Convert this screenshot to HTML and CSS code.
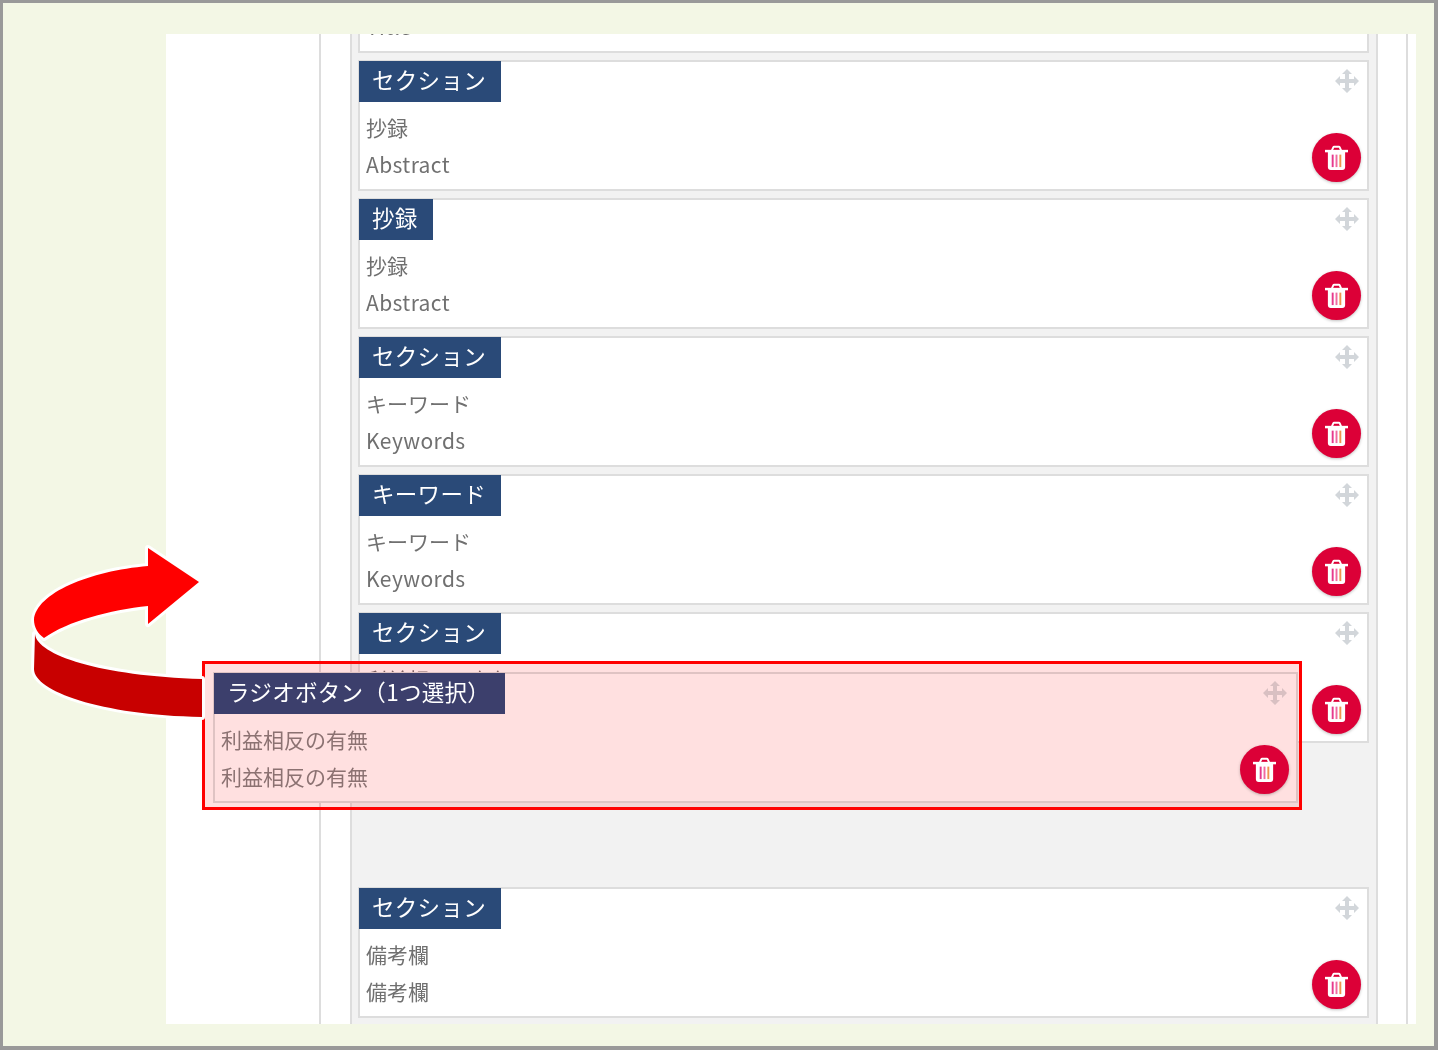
FILE: index.html
```html
<!DOCTYPE html>
<html lang="ja">
<head>
    <meta charset="UTF-8">
    <meta name="viewport" content="width=device-width, initial-scale=1.0">
    <title>フォーム項目の並べ替え</title>
    <link rel="stylesheet" href="styles.css">
</head>
<body>
    <svg class="icon-defs" width="0" height="0">
        <symbol id="icon-move" viewBox="0 0 24 24">
            <path d="M12 0l5 5h-3v5h5V7l5 5-5 5v-3h-5v5h3l-5 5-5-5h3v-5H5v3l-5-5 5-5v3h5V5H7z"/>
        </symbol>
        <symbol id="icon-trash" viewBox="0 0 24 26">
            <path d="M7 6l1.6-3.6a1 1 0 0 1 .9-.6h5a1 1 0 0 1 .9.6L17 6" fill="none" stroke="#fff" stroke-width="2"/>
            <rect x="0" y="5" width="24" height="2.6" fill="#fff"/>
            <path d="M3 7h18v16a3 3 0 0 1-3 3H6a3 3 0 0 1-3-3z" fill="#fff"/>
            <rect x="7" y="10" width="2" height="13" fill="#e6398c"/>
            <rect x="11" y="10" width="2" height="13" fill="#f06aa0"/>
            <rect x="15" y="10" width="2" height="13" fill="#ef944f"/>
        </symbol>
    </svg>

    <div class="frame">
        <div class="panel">
            <div class="outer-col">
                <div class="inner-col">
                    <div class="list">
                        <div class="card">
                            <div class="card-body">
                                <div class="tag">セクション</div>
                                <div class="line">タイトル</div>
                                <div class="line line-en">Title</div>
                            </div>
                        </div>
                        <div class="card">
                            <div class="card-body">
                                <div class="tag">セクション</div>
                                <div class="line">抄録</div>
                                <div class="line line-en">Abstract</div>
                            </div>
                            <div class="card-actions">
                                <svg class="move"><use href="#icon-move"/></svg>
                                <div class="del"><svg class="trash"><use href="#icon-trash"/></svg></div>
                            </div>
                        </div>
                        <div class="card">
                            <div class="card-body">
                                <div class="tag">抄録</div>
                                <div class="line">抄録</div>
                                <div class="line line-en">Abstract</div>
                            </div>
                            <div class="card-actions">
                                <svg class="move"><use href="#icon-move"/></svg>
                                <div class="del"><svg class="trash"><use href="#icon-trash"/></svg></div>
                            </div>
                        </div>
                        <div class="card">
                            <div class="card-body">
                                <div class="tag">セクション</div>
                                <div class="line">キーワード</div>
                                <div class="line line-en">Keywords</div>
                            </div>
                            <div class="card-actions">
                                <svg class="move"><use href="#icon-move"/></svg>
                                <div class="del"><svg class="trash"><use href="#icon-trash"/></svg></div>
                            </div>
                        </div>
                        <div class="card">
                            <div class="card-body">
                                <div class="tag">キーワード</div>
                                <div class="line">キーワード</div>
                                <div class="line line-en">Keywords</div>
                            </div>
                            <div class="card-actions">
                                <svg class="move"><use href="#icon-move"/></svg>
                                <div class="del"><svg class="trash"><use href="#icon-trash"/></svg></div>
                            </div>
                        </div>
                        <div class="card">
                            <div class="card-body">
                                <div class="tag">セクション</div>
                                <div class="line">利益相反の有無</div>
                                <div class="line">利益相反の有無</div>
                            </div>
                            <div class="card-actions">
                                <svg class="move"><use href="#icon-move"/></svg>
                                <div class="del"><svg class="trash"><use href="#icon-trash"/></svg></div>
                            </div>
                        </div>
                        <div class="placeholder"></div>
                        <div class="card">
                            <div class="card-body">
                                <div class="tag">セクション</div>
                                <div class="line">備考欄</div>
                                <div class="line">備考欄</div>
                            </div>
                            <div class="card-actions">
                                <svg class="move"><use href="#icon-move"/></svg>
                                <div class="del"><svg class="trash"><use href="#icon-trash"/></svg></div>
                            </div>
                        </div>
                    </div>
                </div>
            </div>
        </div>

        <!-- item being dragged -->
        <div class="drag-box">
            <div class="card card-drag">
                <div class="card-body">
                    <div class="tag">ラジオボタン（1つ選択）</div>
                    <div class="line">利益相反の有無</div>
                    <div class="line">利益相反の有無</div>
                </div>
                <div class="card-actions">
                    <svg class="move"><use href="#icon-move"/></svg>
                    <div class="del"><svg class="trash"><use href="#icon-trash"/></svg></div>
                </div>
            </div>
        </div>

        <svg class="arrow" viewBox="0 0 210 190" width="210" height="190">
            <path class="arrow-back" d="M35 91C37 112 100 133 202 136V174C100 172 34 148 34 126Z"/>
            <path class="arrow-front" d="M148 23V5L199 39L148 81V63C110 67 68 78 44 95C38 91 34 84 34 77C36 50 90 28 148 23Z"/>
        </svg>
    </div>
</body>
</html>
```

FILE: styles.css
```css
* {
    box-sizing: border-box;
}

body {
    margin: 0;
    font-family: "Noto Sans CJK JP", "Noto Sans", sans-serif;
    color: #707070;
}

.icon-defs {
    display: block;
    height: 0;
}

.frame {
    position: relative;
    width: 1438px;
    height: 1050px;
    padding: 31px 18px 22px 163px;
    background-color: #f3f7e5;
    border-style: solid;
    border-color: #999;
    border-width: 3px 4px 4px 3px;
    overflow: hidden;
    filter: blur(0.4px);
}

.panel {
    height: 100%;
    padding: 0 8px 0 153px;
    background-color: #fff;
    overflow: hidden;
}

.outer-col {
    height: 100%;
    padding: 0 28px 0 29px;
    border-left: 2px solid #ddd;
    border-right: 2px solid #ddd;
}

.inner-col {
    height: 100%;
    padding: 0 7px 0 6px;
    background-color: #f2f2f2;
    border-left: 2px solid #ddd;
    border-right: 2px solid #ddd;
    overflow: hidden;
}

.list {
    display: flex;
    flex-direction: column;
    gap: 7px;
    margin-top: -112px;
}

.card {
    display: flex;
    justify-content: space-between;
    height: 131px;
    flex-shrink: 0;
    background-color: #fff;
    border: 2px solid #ddd;
}

.card-body {
    min-width: 0;
}

.placeholder {
    height: 130px;
    flex-shrink: 0;
}

.tag {
    width: fit-content;
    height: 41px;
    margin: -1px 0 7px -1px;
    padding: 0 15px 0 13px;
    background-color: #2a4a78;
    color: #fff;
    font-size: 22.5px;
    line-height: 37px;
    letter-spacing: 0.3px;
    white-space: nowrap;
}

.line {
    height: 37px;
    padding-left: 6px;
    font-size: 21px;
    line-height: 37px;
    white-space: nowrap;
}

.line-en {
    letter-spacing: 0.4px;
}

.card-actions {
    display: flex;
    flex-direction: column;
    align-items: flex-end;
    justify-content: space-between;
    padding: 7px 6px 7px 0;
}

.move {
    width: 24px;
    height: 24px;
    margin-right: 2px;
    fill: #d2d6da;
}

.del {
    display: flex;
    align-items: center;
    justify-content: center;
    width: 49px;
    height: 49px;
    border-radius: 50%;
    background-color: #dc0037;
    box-shadow: 0 1px 3px rgba(0, 0, 0, 0.25);
}

.trash {
    width: 23px;
    height: 25px;
}

/* dragged item */
.drag-box {
    position: absolute;
    left: 199px;
    top: 658px;
    width: 1100px;
    height: 149px;
    padding: 8px 1px 4px 8px;
    background-color: rgba(255, 0, 0, 0.12);
    border: 3px solid #f00;
}

.card-drag {
    background-color: #ffe0e0;
    border-color: #dfc3c3;
    color: #8c7272;
}

.card-drag .card-actions {
    padding-right: 7px;
}

.card-drag .tag {
    background-color: #3c3f6c;
}

.card-drag .move {
    fill: #d9c0c2;
}

.arrow {
    position: absolute;
    left: -3px;
    top: 540px;
}

.arrow-front,
.arrow-back {
    stroke: #fff;
    stroke-width: 6px;
    stroke-linejoin: round;
    paint-order: stroke;
}

.arrow-front {
    fill: #f00;
}

.arrow-back {
    fill: #c80000;
}
```
